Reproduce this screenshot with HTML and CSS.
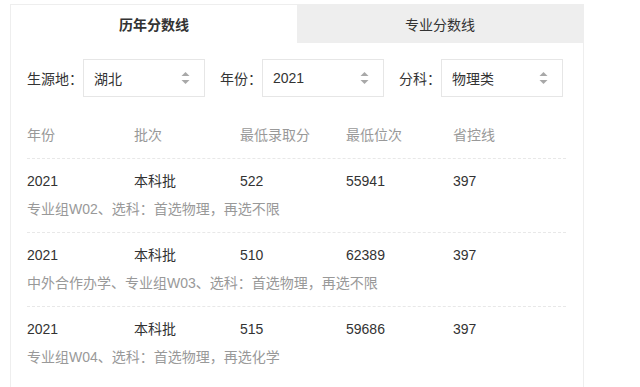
FILE: index.html
```html
<!DOCTYPE html>
<html lang="zh-CN">
<head>
    <meta charset="UTF-8">
    <meta name="viewport" content="width=device-width, initial-scale=1.0">
    <title>历年分数线</title>
    <link rel="stylesheet" href="styles.css">
</head>
<body>
    <div class="panel">
        <div class="tabs">
            <div class="tab active">历年分数线</div>
            <div class="tab">专业分数线</div>
        </div>

        <div class="filters">
            <div class="filter">
                <span class="filter-label">生源地：</span>
                <div class="select">
                    <span>湖北</span>
                    <svg class="arrows" width="9" height="14" viewBox="0 0 9 14"><path d="M4.5 1 L8.5 5 L0.5 5 Z M0.5 9 L8.5 9 L4.5 13 Z" fill="#a8a8a8"/></svg>
                </div>
            </div>
            <div class="filter">
                <span class="filter-label">年份：</span>
                <div class="select">
                    <span>2021</span>
                    <svg class="arrows" width="9" height="14" viewBox="0 0 9 14"><path d="M4.5 1 L8.5 5 L0.5 5 Z M0.5 9 L8.5 9 L4.5 13 Z" fill="#a8a8a8"/></svg>
                </div>
            </div>
            <div class="filter">
                <span class="filter-label">分科：</span>
                <div class="select">
                    <span>物理类</span>
                    <svg class="arrows" width="9" height="14" viewBox="0 0 9 14"><path d="M4.5 1 L8.5 5 L0.5 5 Z M0.5 9 L8.5 9 L4.5 13 Z" fill="#a8a8a8"/></svg>
                </div>
            </div>
        </div>

        <div class="score-table">
            <div class="row head">
                <span>年份</span>
                <span>批次</span>
                <span>最低录取分</span>
                <span>最低位次</span>
                <span>省控线</span>
            </div>

            <div class="item">
                <div class="row">
                    <span>2021</span>
                    <span>本科批</span>
                    <span>522</span>
                    <span>55941</span>
                    <span>397</span>
                </div>
                <div class="note">专业组W02、选科：首选物理，再选不限</div>
            </div>

            <div class="item">
                <div class="row">
                    <span>2021</span>
                    <span>本科批</span>
                    <span>510</span>
                    <span>62389</span>
                    <span>397</span>
                </div>
                <div class="note">中外合作办学、专业组W03、选科：首选物理，再选不限</div>
            </div>

            <div class="item">
                <div class="row">
                    <span>2021</span>
                    <span>本科批</span>
                    <span>515</span>
                    <span>59686</span>
                    <span>397</span>
                </div>
                <div class="note">专业组W04、选科：首选物理，再选化学</div>
            </div>
        </div>
    </div>
</body>
</html>
```

FILE: styles.css
```css
body {
    margin: 0;
    background: #fff;
    font-family: "Liberation Sans", "Noto Sans CJK SC", sans-serif;
    font-size: 14px;
    color: #333;
    overflow: hidden;
}

.panel {
    box-sizing: border-box;
    margin: 4px 0 0 10px;
    width: 574px;
    height: 383px;
    border: 1px solid #eee;
    border-bottom: none;
}

.tabs {
    display: flex;
    height: 38px;
}

.tab {
    flex: 1;
    display: flex;
    align-items: center;
    justify-content: center;
    background: #eee;
    color: #333;
}

.tab.active {
    background: #fff;
    font-weight: bold;
}

.filters {
    display: flex;
    margin-top: 16px;
    padding-left: 16px;
}

.filter {
    display: flex;
    align-items: center;
    margin-right: 15px;
}

.filter-label {
    color: #333;
    white-space: nowrap;
}

.select {
    box-sizing: border-box;
    width: 122px;
    height: 38px;
    border: 1px solid #e6e6e6;
    display: flex;
    align-items: center;
    justify-content: space-between;
    padding: 0 14px 0 10px;
}

.arrows {
    display: block;
}

.score-table {
    margin-top: 15px;
    padding: 0 17px 0 16px;
}

.row {
    display: grid;
    grid-template-columns: 107px 106px 106px 107px 1fr;
    line-height: 22px;
}

.row.head {
    color: #999;
    padding: 12px 0;
}

.item {
    border-top: 1px dashed #e8e8e8;
    padding: 11px 0 12px;
}

.note {
    margin-top: 6px;
    line-height: 22px;
    color: #999;
}
```
